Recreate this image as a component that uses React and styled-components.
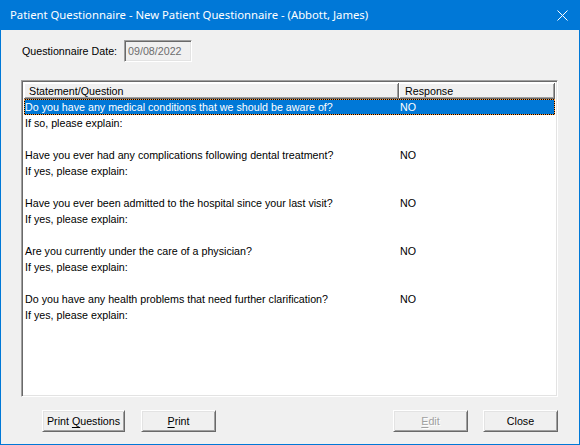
import React from "react";
import styled, { createGlobalStyle } from "styled-components";

const Global = createGlobalStyle`
  html, body { margin: 0; padding: 0; background: #f0f0f0; }
  * { box-sizing: border-box; }
`;

const Window = styled.div`
  width: 580px;
  height: 445px;
  display: flex;
  flex-direction: column;
  border: 1px solid #0078d7;
  border-top: none;
  background: #f0f0f0;
  font-family: "Liberation Sans", Arial, sans-serif;
  font-size: 10.7px;
  color: #000;
`;

const TitleBar = styled.div`
  height: 30px;
  margin: 0 -1px;
  padding: 0 12px 0 10px;
  background: #0078d7;
  color: #fff;
  display: flex;
  align-items: center;
  justify-content: space-between;
  font-family: "Noto Sans", "Open Sans", sans-serif;
  font-size: 11.3px;
  flex-shrink: 0;
`;

const TitleText = styled.span`
  white-space: nowrap;
  padding-bottom: 1px;
`;

const Body = styled.div`
  flex: 1;
  display: flex;
  flex-direction: column;
  padding: 10px 0 0 20px;
`;

const DateRow = styled.div`
  display: flex;
  align-items: center;
  padding-left: 1px;
  height: 22px;
`;

const Label = styled.span`
  margin-right: 7px;
`;

const Sunken = styled.div`
  border-top: 1px solid #a0a0a0;
  border-left: 1px solid #a0a0a0;
  border-bottom: 1px solid #fff;
  border-right: 1px solid #fff;
  box-shadow: inset 1px 1px 0 #696969, inset -1px -1px 0 #e3e3e3;
`;

const DateBox = styled(Sunken)`
  width: 68px;
  height: 22px;
  padding: 0 0 0 3px;
  display: flex;
  align-items: center;
  color: #6d6d6d;
  background: #f0f0f0;
`;

const List = styled(Sunken)`
  margin-top: 18px;
  width: 537px;
  height: 317px;
  background: #fff;
  padding: 2px;
  display: flex;
  flex-direction: column;
`;

const Header = styled.div`
  display: flex;
  height: 16px;
  flex-shrink: 0;
`;

const HeaderCell = styled.div`
  width: ${(p) => p.$w}px;
  height: 16px;
  padding-left: ${(p) => p.$pad}px;
  background: #f0f0f0;
  border-right: 1px solid #696969;
  border-bottom: 1px solid #696969;
  box-shadow: inset 1px 1px 0 #fff, inset -1px -1px 0 #a0a0a0;
  display: flex;
  align-items: center;
  white-space: nowrap;
`;

const Row = styled.div`
  position: relative;
  display: flex;
  height: 16px;
  align-items: center;
  background: ${(p) => (p.$selected ? "#0078d7" : "transparent")};
  color: ${(p) => (p.$selected ? "#fff" : "#000")};
  box-shadow: ${(p) => (p.$selected ? "inset 0 0 0 1px #000" : "none")};
  white-space: nowrap;
  &::after {
    content: "";
    display: ${(p) => (p.$selected ? "block" : "none")};
    position: absolute;
    inset: 0;
    border: 1px dotted #ff9a3c;
  }
`;

const Cell = styled.div`
  width: ${(p) => p.$w}px;
  padding-left: 1px;
  flex-shrink: 0;
`;

const ButtonRow = styled.div`
  display: flex;
  margin-top: 13px;
  padding-left: 21px;
`;

const Button = styled.button`
  width: ${(p) => p.$w || 75}px;
  height: 22px;
  margin-left: ${(p) => p.$ml || 0}px;
  padding: 0;
  font-family: inherit;
  font-size: 10.7px;
  background: #f0f0f0;
  color: ${(p) => (p.disabled ? "#a0a0a0" : "#000")};
  text-shadow: ${(p) => (p.disabled ? "1px 1px 0 #fff" : "none")};
  border-top: 1px solid #fff;
  border-left: 1px solid #fff;
  border-right: 1px solid #696969;
  border-bottom: 1px solid #696969;
  box-shadow: inset 1px 1px 0 #e3e3e3, inset -1px -1px 0 #a0a0a0;
  white-space: nowrap;
  u { text-decoration-thickness: 1px; text-underline-offset: 2px; }
`;

const CloseIcon = () => (
  <svg width="11" height="11" viewBox="0 0 11 11">
    <path d="M0.5 0.5 L10.5 10.5 M10.5 0.5 L0.5 10.5" stroke="#fff" strokeWidth="1" fill="none" />
  </svg>
);

const questions = [
  ["Do you have any medical conditions that we should be aware of?", "If so, please explain:"],
  ["Have you ever had any complications following dental treatment?", "If yes, please explain:"],
  ["Have you ever been admitted to the hospital since your last visit?", "If yes, please explain:"],
  ["Are you currently under the care of a physician?", "If yes, please explain:"],
  ["Do you have any health problems that need further clarification?", "If yes, please explain:"],
];

export default function App() {
  return (
    <>
      <Global />
      <Window>
        <TitleBar>
          <TitleText>Patient Questionnaire - New Patient Questionnaire - (Abbott, James)</TitleText>
          <CloseIcon />
        </TitleBar>
        <Body>
          <DateRow>
            <Label>Questionnaire Date:</Label>
            <DateBox>09/08/2022</DateBox>
          </DateRow>
          <List>
            <Header>
              <HeaderCell $w={375} $pad={5}>Statement/Question</HeaderCell>
              <HeaderCell $w={156} $pad={6}>Response</HeaderCell>
            </Header>
            {questions.map(([q, e], i) => (
              <React.Fragment key={i}>
                <Row $selected={i === 0}>
                  <Cell $w={375}>{q}</Cell>
                  <Cell $w={150}>NO</Cell>
                </Row>
                <Row>
                  <Cell $w={375}>{e}</Cell>
                </Row>
                <Row />
              </React.Fragment>
            ))}
          </List>
          <ButtonRow>
            <Button $w={83}>Print <u>Q</u>uestions</Button>
            <Button $ml={16}><u>P</u>rint</Button>
            <Button $ml={177} disabled><u>E</u>dit</Button>
            <Button $ml={15}>Close</Button>
          </ButtonRow>
        </Body>
      </Window>
    </>
  );
}
